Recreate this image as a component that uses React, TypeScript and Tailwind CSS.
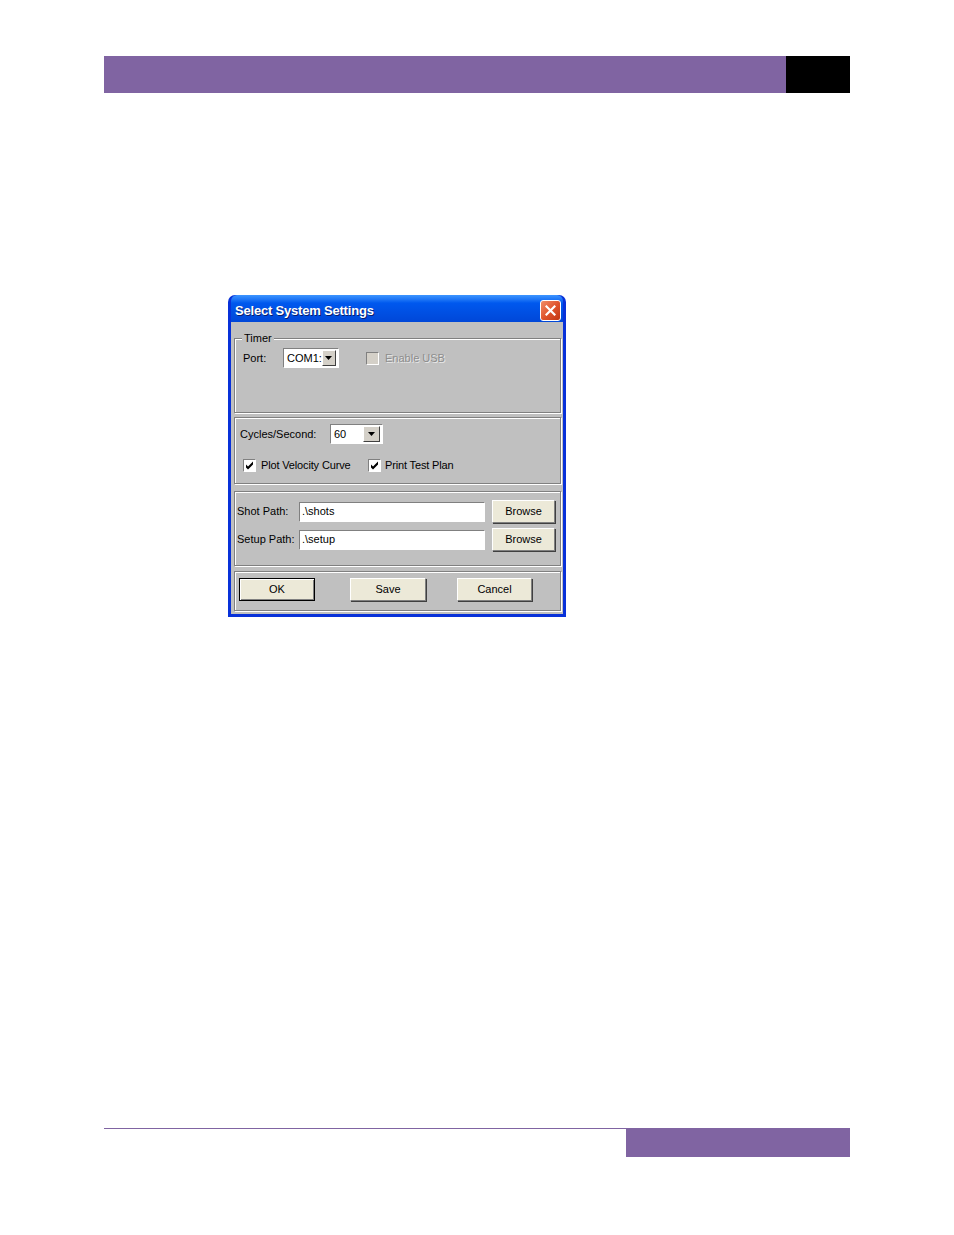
const sans = "font-['Liberation_Sans',Arial,sans-serif]";

function Combo({ value, width }: { value: string; width: number }) {
  return (
    <div
      className="flex h-[20px] items-center border border-t-[#808080] border-l-[#808080] border-b-white border-r-white bg-white pl-[3px] pr-[2px]"
      style={{ width }}
    >
      <span className="flex-1 text-[11px] leading-none text-black">{value}</span>
      <div className="flex h-[16px] w-[17px] items-center justify-center border border-t-white border-l-white border-b-[#404040] border-r-[#404040] bg-[#d4d0c8]">
        <svg width="7" height="4" viewBox="0 0 7 4">
          <path d="M0 0h7L3.5 4z" fill="#000" />
        </svg>
      </div>
    </div>
  );
}

function Check({ checked, disabled }: { checked?: boolean; disabled?: boolean }) {
  return (
    <div
      className={
        "flex h-[13px] w-[13px] items-center justify-center border border-t-[#808080] border-l-[#808080] border-b-white border-r-white " +
        (disabled ? "bg-[#d4d0c8]" : "bg-white")
      }
    >
      {checked && (
        <svg width="9" height="9" viewBox="0 0 9 9">
          <path d="M1 3.5l2 2L8 0.5v3L3 8.5l-2-2z" fill="#000" />
        </svg>
      )}
    </div>
  );
}

function Button({ label, width, isDefault }: { label: string; width: number; isDefault?: boolean }) {
  return (
    <div
      className={
        "flex h-[23px] items-center justify-center bg-[#ece9d8] text-[11px] text-black " +
        (isDefault
          ? "border border-black shadow-[inset_1px_1px_0_#fff,inset_-1px_-1px_0_#808080]"
          : "border border-t-white border-l-white border-b-[#808080] border-r-[#808080] shadow-[1px_1px_0_#404040]")
      }
      style={{ width }}
    >
      {label}
    </div>
  );
}

function Input({ value }: { value: string }) {
  return (
    <div className="flex h-[20px] w-[186px] items-center border border-t-[#808080] border-l-[#808080] border-b-white border-r-white bg-white pl-[2px] text-[11px] text-black">
      {value}
    </div>
  );
}

const panel =
  "border border-[#808080] shadow-[inset_1px_1px_0_#fff,1px_1px_0_#fff] ml-[3px] mr-[2px]";

export default function App() {
  return (
    <div className={"relative h-[1235px] w-[954px] bg-white " + sans}>
      <div className="pt-[56px]">
        {/* header bar */}
        <div className="ml-[104px] flex h-[37px] w-[746px]">
          <div className="flex-1 bg-[#8064a2]" />
          <div className="w-[64px] bg-black" />
        </div>

        {/* dialog */}
        <div className="ml-[228px] mt-[202px] flex h-[322px] w-[338px] flex-col rounded-t-[7px] bg-[#0831d9] px-[3px] pb-[3px]">
          <div className="flex h-[27px] items-center justify-between rounded-t-[6px] bg-gradient-to-b from-[#3d95ff] via-[#0058ee] via-30% to-[#0047d8] pl-[4px] pr-[2px]">
            <span className="pt-[5px] text-[13px] font-bold tracking-[-0.2px] text-white [text-shadow:1px_1px_0_#0a1e6e]">
              Select System Settings
            </span>
            <div className="mt-[4px] flex h-[21px] w-[21px] items-center justify-center rounded-[3px] border border-white bg-gradient-to-br from-[#f08c68] via-[#e0552d] to-[#c23510]">
              <svg width="11" height="11" viewBox="0 0 11 11">
                <path d="M1.5 1.5l8 8M9.5 1.5l-8 8" stroke="#fff" strokeWidth="2.2" strokeLinecap="square" />
              </svg>
            </div>
          </div>

          <div className="flex flex-1 flex-col bg-[#c0c0c0] pt-[16px] text-[11px] text-black">
            {/* timer group */}
            <div className={panel + " relative h-[75px] pl-[8px] pt-[9px]"}>
              <span className="absolute left-[7px] top-[-7px] bg-[#c0c0c0] px-[2px] leading-[13px]">Timer</span>
              <div className="flex items-center">
                <span className="w-[40px]">Port:</span>
                <Combo value="COM1:" width={56} />
                <div className="ml-[27px] flex items-center gap-[6px]">
                  <Check disabled />
                  <span className="text-[#8d8d8d] [text-shadow:1px_1px_0_#e8e8e8]">Enable USB</span>
                </div>
              </div>
            </div>

            {/* cycles */}
            <div className={panel + " mt-[4px] h-[67px] pl-[5px] pt-[6px]"}>
              <div className="flex items-center">
                <span className="w-[90px]">Cycles/Second:</span>
                <Combo value="60" width={53} />
              </div>
              <div className="mt-[13px] flex items-center pl-[3px]">
                <Check checked />
                <span className="ml-[5px] w-[107px] tracking-[-0.15px]">Plot Velocity Curve</span>
                <Check checked />
                <span className="ml-[4px] tracking-[-0.15px]">Print Test Plan</span>
              </div>
            </div>

            {/* paths */}
            <div className={panel + " mt-[7px] h-[75px] pl-[2px] pt-[8px]"}>
              <div className="flex items-center">
                <span className="w-[62px]">Shot Path:</span>
                <Input value=".\shots" />
                <div className="ml-[7px]">
                  <Button label="Browse" width={63} />
                </div>
              </div>
              <div className="mt-[5px] flex items-center">
                <span className="w-[62px]">Setup Path:</span>
                <Input value=".\setup" />
                <div className="ml-[7px]">
                  <Button label="Browse" width={63} />
                </div>
              </div>
            </div>

            {/* buttons */}
            <div className={panel + " mt-[5px] flex h-[40px] items-start pl-[4px] pt-[6px]"}>
              <Button label="OK" width={76} isDefault />
              <div className="ml-[35px]">
                <Button label="Save" width={76} />
              </div>
              <div className="ml-[31px]">
                <Button label="Cancel" width={75} />
              </div>
            </div>
          </div>
        </div>

        {/* footer */}
        <div className="ml-[104px] mt-[511px] w-[746px]">
          <div className="h-px bg-[#8064a2]" />
          <div className="ml-auto h-[28px] w-[224px] bg-[#8064a2]" />
        </div>
      </div>
    </div>
  );
}
